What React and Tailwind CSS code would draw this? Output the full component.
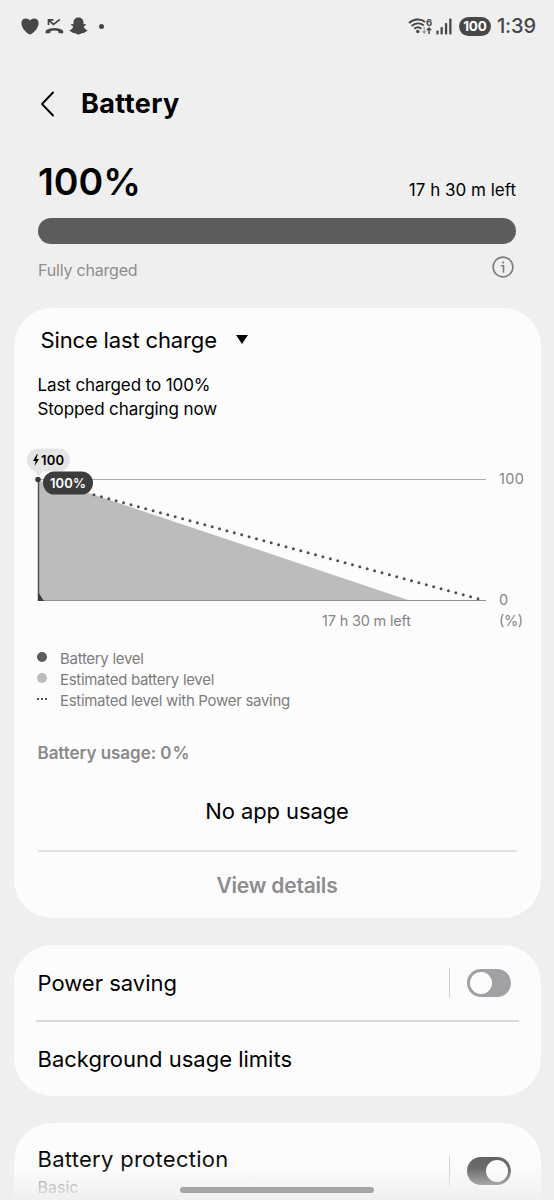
const legend = [
  { label: "Battery level", type: "dark" },
  { label: "Estimated battery level", type: "light" },
  { label: "Estimated level with Power saving", type: "dots" },
];

// ==============================
// STATUS BAR
// ==============================

const StatusBar = () => (
  <div className="flex h-[52px] items-center justify-between pl-[21px] pr-[18px] text-[#474747]">

    <div className="flex items-center">

      <svg width="18" height="17" viewBox="0 0 18 17" fill="currentColor">
        <path d="M9 16.6C7.2 16.2.6 11 .4 5.4.3 2.300 2.300.6 4.700.6 6.600.6 8.200 1.500 9 2.700 9.800 1.500 11.400.6 13.300.6 15.700.6 17.700 2.300 17.600 5.400 17.400 11 10.800 16.200 9 16.600Z" />
      </svg>

      <svg className="ml-[6px]" width="19" height="17" viewBox="0 0 19 17" fill="none">
        <path d="M3.500 7V1.800H8.500M3.800 2.100 8.400 6.400 14.800 1.500" stroke="currentColor" strokeWidth="1.700" />
        <path d="M1 15.600C.2 14.800.3 12.900 1.400 12 5 9.200 14 9.200 17.400 12 18.500 12.900 18.600 14.800 17.800 15.600L13.700 15C13.300 14.200 13.300 13.600 13 12.900 11 12.200 7.800 12.200 5.800 12.900 5.500 13.600 5.500 14.200 5.100 15Z" fill="currentColor" />
      </svg>

      <svg className="ml-[5px]" width="19" height="18" viewBox="0 0 19 18" fill="currentColor">
        <path d="M9.500.5C12.500.5 14.500 2.600 14.500 5.400V7.300L16.500 6.900C17.300 7.300 17 8.200 16.200 8.600L14.700 9.300C15.200 11.300 16.600 12.700 18.400 13.300 18.500 14.300 17.300 14.700 15.900 15L15.300 16C14 15.800 13 15.900 12.200 16.500 10.500 17.900 8.500 17.900 6.800 16.500 6 15.900 5 15.800 3.700 16L3.100 15C1.700 14.700.5 14.300.6 13.300 2.400 12.700 3.800 11.300 4.300 9.300L2.800 8.600C2 8.200 1.700 7.300 2.500 6.900L4.500 7.300V5.400C4.500 2.600 6.500.5 9.500.5Z" />
      </svg>

      <span className="ml-[11px] size-[5px] rounded-full bg-current" />

    </div>

    <div className="flex items-center">

      <svg width="25" height="19" viewBox="0 0 25 19" fill="none" stroke="currentColor">
        <path d="M1 6.200C5.500 1.600 13 1.300 17 5" strokeWidth="1.900" />
        <path d="M3.600 9C7.200 5.600 12.300 5.500 15.800 8.500" strokeWidth="1.900" />
        <path d="M6.300 11.800C8.600 9.800 11.200 9.800 13.400 11.700" strokeWidth="1.900" />
        <circle cx="9.800" cy="14.500" r="1.700" fill="currentColor" stroke="none" />
        <path d="M16.200 10V16M14.300 14.200 16.200 16.200 18.100 14.200" stroke="#a0a0a0" strokeWidth="1.200" />
        <path d="M21 17V11M18.800 13.200 21 11 23.200 13.200" strokeWidth="1.500" />
        <text x="18" y="8.500" fontSize="9.500" fontWeight="700" fill="currentColor" stroke="none">6</text>
      </svg>

      <svg className="ml-[3px]" width="16" height="17" viewBox="0 0 16 17" fill="currentColor">
        <rect x="0.400" y="12.500" width="2.200" height="4" rx="0.800" />
        <rect x="4.500" y="9" width="2.300" height="7.500" rx="0.800" />
        <rect x="8.900" y="5" width="2.300" height="11.500" rx="0.800" />
        <rect x="13.200" y="0.500" width="2.300" height="16" rx="0.800" />
      </svg>

      <span className="ml-[7px] flex h-[19px] w-8 items-center justify-center rounded-full bg-[#474747] text-[13.500px] font-bold tracking-[-0.2px] text-white">
        100
      </span>

      <span className="ml-[6px] text-[20px] font-medium tracking-[-0.1px]">1:39</span>

    </div>

  </div>
);

// ==============================
// CHART
// ==============================

const BatteryChart = () => (
  <svg className="block" width="515" height="192" viewBox="0 0 515 192">

    {/* origin is 24px left of the plot, y 0 is the top of the badges */}

    <path d="M24 33 48 36 397 153H24Z" fill="#bcbcbc" />
    <path d="M24 31.500H472" stroke="#adadad" />
    <path d="M24 152.500H472" stroke="#8f8f8f" />
    <path d="M24.500 32V153" stroke="#505050" strokeWidth="1.500" />
    <path d="M24 144 30 153H24Z" fill="#3c3c3c" />
    <path
      d="M80 46.700 467 151.500"
      stroke="#505050"
      strokeWidth="3"
      strokeLinecap="round"
      strokeDasharray="0 7.650"
    />
    <circle cx="24" cy="31.500" r="2.800" fill="#3c3c3c" />

    <path d="M20 23H29L25 28Z" fill="#e4e4e5" />
    <rect x="13" y="0.500" width="43" height="23" rx="11.500" fill="#e4e4e5" />
    <path d="M23 6 19 13H21.700L20.600 18 25 11H22.300L23.700 6Z" fill="#000" />
    <text x="27" y="17" fontSize="13" fontWeight="600" textLength="23">100</text>

    <rect x="29" y="23.500" width="50" height="23" rx="11.500" fill="#3c3c3c" />
    <text x="36" y="40" fontSize="13" fontWeight="600" fill="#fff" textLength="36">100%</text>

    <g fontSize="14.500" fill="#848484">
      <text x="485" y="35.500" textLength="25">100</text>
      <text x="485" y="156.500">0</text>
      <text x="485" y="178" textLength="24">(%)</text>
      <text x="308" y="178" textLength="89">17 h 30 m left</text>
    </g>

  </svg>
);

const LegendMark = ({ type }) => {
  if (type === "dots") {
    return (
      <span className="flex w-[10px] justify-between">
        <span className="size-[2px] bg-[#505050]" />
        <span className="size-[2px] bg-[#505050]" />
        <span className="size-[2px] bg-[#505050]" />
      </span>
    );
  }

  return (
    <span
      className={`size-[10px] rounded-full ${type === "dark" ? "bg-[#5c5c5c]" : "bg-[#bcbcbc]"}`}
    />
  );
};

// ==============================
// SWITCH
// ==============================

const Toggle = ({ on }) => (
  <div className="flex items-center">

    <span className="mr-[17px] h-[30px] w-px bg-[#d2d2d3]" />

    <span
      className={`flex h-[28px] w-[44px] items-center rounded-full px-[3px] ${on ? "justify-end bg-[#5c5c5c]" : "bg-[#a1a1a5]"}`}
    >
      <span className="size-[22px] rounded-full bg-[#fcfcfc]" />
    </span>

  </div>
);

const App = () => {
  return (
    <div className="relative h-[1200px] w-[554px] overflow-hidden bg-[#efefef] font-['Inter',sans-serif] text-black">

      <StatusBar />

      {/* HEADER */}

      <div className="flex h-[104px] items-center pl-[40px]">
        <svg width="15" height="26" viewBox="0 0 15 26" fill="none">
          <path d="M13 1.500 2 13 13 24.500" stroke="#000" strokeWidth="1.900" strokeLinecap="round" strokeLinejoin="round" />
        </svg>
        <h1 className="ml-[26px] text-[27px] font-bold tracking-[0.4px]">Battery</h1>
      </div>

      {/* CHARGE LEVEL */}

      <div className="h-[152px] px-[38px]">

        <div className="flex h-[62px] items-center justify-between">
          <span className="mt-[-9px] text-[37.500px] font-semibold">100%</span>
          <span className="mt-[8px] text-[17px]">17 h 30 m left</span>
        </div>

        <div className="h-[26px] rounded-full bg-[#5c5c5c]" />

        <div className="flex h-[48px] items-center justify-between pr-[2px]">
          <span className="mt-[3px] text-base tracking-[-0.2px] text-[#8d8d8d]">Fully charged</span>
          <svg className="mt-[-2px]" width="22" height="22" viewBox="0 0 22 22" fill="none" stroke="#7d7d7d">
            <circle cx="11" cy="11" r="9.900" strokeWidth="1.600" />
            <path d="M8.900 9.700H11.500V16.700" strokeWidth="1.600" />
            <circle cx="11.200" cy="6.500" r="1.100" fill="#7d7d7d" stroke="none" />
          </svg>
        </div>

      </div>

      {/* USAGE CARD */}

      <div className="mx-[13.500px] h-[610px] rounded-[38px] bg-[#fcfcfc] px-[24px]">

        <div className="flex h-[65px] items-center pl-[3px]">
          <span className="text-[22px] tracking-[-0.15px]">Since last charge</span>
          <svg className="mt-[-2px] ml-[19px]" width="12" height="9" viewBox="0 0 12 9">
            <path d="M0 0H12L6 9Z" />
          </svg>
        </div>

        <div className="h-[75px] text-[17px] leading-[24px] tracking-[-0.1px]">
          <p>Last charged to 100%</p>
          <p>Stopped charging now</p>
        </div>

        <div className="ml-[-24px] h-[198px]">
          <BatteryChart />
        </div>

        <div className="ml-[-0.5px]">
          {legend.map((item) => (
            <div key={item.label} className="flex h-[21px] items-center">
              <LegendMark type={item.type} />
              <span className="ml-[13px] pt-[3px] text-[15px] leading-[21px] tracking-[-0.3px] text-[#7d7d7d]">
                {item.label}
              </span>
            </div>
          ))}
        </div>

        <p className="mt-[31px] text-[17px] font-semibold leading-[26px] tracking-[-0.05px] text-[#8a8a8a]">
          Battery usage: 0<span className="ml-px">%</span>
        </p>

        <p className="mt-[31px] text-center text-[22px] leading-[28px] tracking-[-0.1px]">No app usage</p>

        <div className="mt-[25px] h-[1.500px] bg-[#e2e2e2]" />

        <p className="mt-[19px] text-center text-[21px] font-semibold leading-[30px] tracking-[-0.2px] text-[#8d8d8f]">
          View details
        </p>

      </div>

      {/* POWER SAVING */}

      <div className="mx-[13.500px] mt-[27px] h-[151px] rounded-[38px] bg-[#fcfcfc] px-[24px]">

        <div className="flex h-[75px] items-center justify-between pr-[6px]">
          <span className="pt-[2px] text-[22px]">Power saving</span>
          <Toggle on={false} />
        </div>

        <div className="mx-[-2px] h-[1.500px] bg-[#d9d9d9]" />

        <div className="flex h-[74px] items-center">
          <span className="pt-px text-[22px]">Background usage limits</span>
        </div>

      </div>

      {/* BATTERY PROTECTION */}

      <div className="mx-[13.500px] mt-[27px] flex h-[120px] justify-between rounded-t-[38px] bg-[#fcfcfc] pl-[24px] pr-[30px]">

        <div className="pt-[21px]">
          <p className="text-[22px] leading-[30px] tracking-[0.28px]">Battery protection</p>
          <p className="text-base leading-[26px] text-[#8d8d8d]">Basic</p>
        </div>

        <div className="pt-[33px]">
          <Toggle on />
        </div>

      </div>

      {/* BOTTOM FADE AND HOME BAR */}

      <div className="absolute inset-x-0 bottom-0 h-[50px] bg-[linear-gradient(to_bottom,rgba(239,239,239,0),rgba(239,239,239,0.1)_35%,rgba(239,239,239,0.45)_65%,rgba(239,239,239,0.95))]" />
      <div className="absolute bottom-[7px] left-[180px] h-[6px] w-[194px] rounded-full bg-[#a5a5a5]" />

    </div>
  );
};

export default App;
